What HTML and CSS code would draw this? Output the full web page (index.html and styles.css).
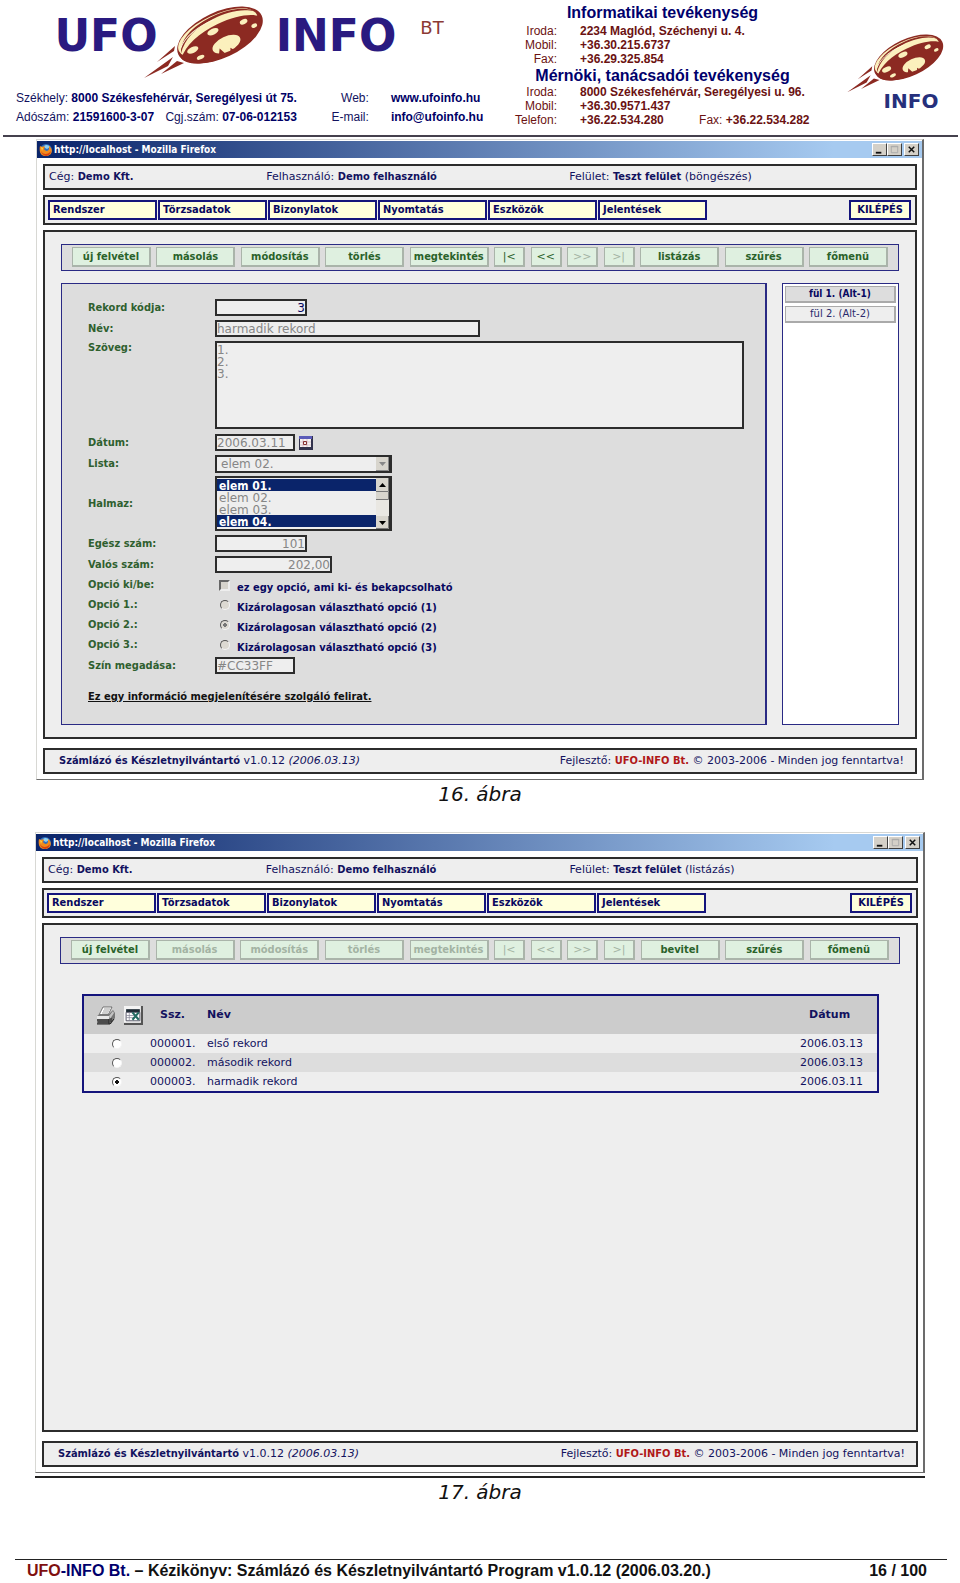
FILE: index.html
```html
<!DOCTYPE html>
<html lang="hu">
<head>
<meta charset="utf-8">
<title>Kézikönyv: Számlázó és Készletnyilvántartó Program</title>
<link rel="stylesheet" href="styles.css">
</head>
<body>
<svg class="defs" aria-hidden="true">
  <symbol id="saucer" viewBox="140 0 130 80">
    <g transform="rotate(-25 220 35)">
      <ellipse cx="220" cy="35" rx="46" ry="23" fill="#8c2a22"/>
      <ellipse cx="219" cy="32" rx="43" ry="18" fill="#fbf0bd"/>
      <path d="M177 35C183 20 203 15 222 15C242 15 257 21 262 29C252 20 236 17 220 17.500C200 18 186 24 177 35Z" fill="#8c2a22"/>
      <path d="M179 30C190 20 206 18 221 18.500" fill="none" stroke="#fff8dc" stroke-width="1"/>
      <path d="M175 40C184 30 202 24 222 24C244 24 259 29 265 36C262 49 244 57 220 57C196 57 178 50 175 40Z" fill="#8c2a22"/>
      <ellipse cx="222" cy="46" rx="15" ry="7.500" fill="#fbf0bd"/>
      <ellipse cx="215" cy="29" rx="6" ry="3" fill="#fbf0bd"/>
      <ellipse cx="247" cy="33" rx="4" ry="2.500" fill="#fbf0bd"/>
      <ellipse cx="255" cy="41" rx="3" ry="2" fill="#fbf0bd"/>
      <ellipse cx="189" cy="37" rx="6" ry="3" fill="#fbf0bd"/>
      <ellipse cx="193" cy="47" rx="4" ry="2" fill="#fbf0bd"/>
      <path d="M211 52l3-5 3 7zM222 56l2-5 3 4z" fill="#8c2a22"/>
    </g>
    <path d="M175 46L157 62L174 51ZM173 57L144 78L168 66ZM177 61L161 74L184 63Z" fill="#8c2a22"/>
  </symbol>
  <symbol id="fox" viewBox="0 0 14 14">
    <circle cx="7" cy="7" r="6" fill="#2f6fc0"/>
    <path d="M5 3C7 1 10 2 11 4L8 6L6 5Z" fill="#8fd0f0"/>
    <path d="M1 3L3 4C4 3 5 3 6 4L5 6C6 8 9 9 10 6L10 3C15 6 13 13 7 13C1 13 0 8 1 3Z" fill="#f08a1c"/>
    <path d="M2 8C4 12 9 12 12 8C11 15 3 14 2 8Z" fill="#d9420f"/>
    <path d="M2 4L4 5L3 8Z" fill="#ffd54a"/>
  </symbol>
  <symbol id="min" viewBox="0 0 14 12"><path d="M3 9.500h6" stroke="#111" stroke-width="2"/></symbol>
  <symbol id="max" viewBox="0 0 14 12"><path d="M3.500 2.500h7v7h-7zM3 3h8" fill="none" stroke="#a9a9a9"/></symbol>
  <symbol id="close" viewBox="0 0 14 12"><path d="M4 3l6 6M10 3l-6 6" stroke="#111" stroke-width="1.600"/></symbol>
</svg>

<header class="letterhead">
  <div class="brand">
    <svg class="logo" viewBox="0 0 490 84" role="img" aria-label="UFO-INFO Bt">
      <text class="wordmark" x="106" y="51" text-anchor="middle">UFO</text>
      <use href="#saucer" x="140" y="0" width="130" height="80"/>
      <text class="wordmark" x="336" y="51" text-anchor="middle">INFO</text>
      <text class="wordmark-bt" x="432" y="34" text-anchor="middle">BT</text>
    </svg>
    <div class="seat">
      <div>Székhely: <b>8000 Székesfehérvár, Seregélyesi út 75.</b></div>
      <div class="seat-label">Web:</div><b>www.ufoinfo.hu</b>
      <div>Adószám: <b>21591600-3-07</b> <span class="reg">Cgj.szám: <b>07-06-012153</b></span></div>
      <div class="seat-label">E-mail:</div><b>info@ufoinfo.hu</b>
    </div>
  </div>
  <div class="offices">
    <h2>Informatikai tevékenység</h2>
    <dl>
      <dt>Iroda:</dt><dd>2234 Maglód, Széchenyi u. 4.</dd>
      <dt>Mobil:</dt><dd>+36.30.215.6737</dd>
      <dt>Fax:</dt><dd>+36.29.325.854</dd>
    </dl>
    <h2>Mérnöki, tanácsadói tevékenység</h2>
    <dl>
      <dt>Iroda:</dt><dd>8000 Székesfehérvár, Seregélyesi u. 96.</dd>
      <dt>Mobil:</dt><dd>+36.30.9571.437</dd>
      <dt>Telefon:</dt><dd>+36.22.534.280 <span class="fax"><span>Fax:</span> +36.22.534.282</span></dd>
    </dl>
  </div>
  <svg class="logo-small" viewBox="0 0 114 84" role="img" aria-label="INFO">
    <use href="#saucer" x="0" y="0" width="105" height="65"/>
    <text class="wordmark-small" x="67" y="79" text-anchor="middle">INFO</text>
  </svg>
</header>

<main>
  <figure>
    <section class="window">
      <div class="titlebar">
        <svg class="fox"><use href="#fox"/></svg><span>http://localhost - Mozilla Firefox</span>
        <div class="winbuttons">
          <button aria-label="Kis méret"><svg><use href="#min"/></svg></button>
          <button aria-label="Teljes méret"><svg><use href="#max"/></svg></button>
          <button class="close" aria-label="Bezárás"><svg><use href="#close"/></svg></button>
        </div>
      </div>
      <div class="panels">
        <div class="panel status">
          <span>Cég: <b>Demo Kft.</b></span><span>Felhasználó: <b>Demo felhasználó</b></span><span>Felület: <b>Teszt felület</b> (böngészés)</span>
        </div>
        <nav class="panel menu">
          <button>Rendszer</button><button>Törzsadatok</button><button>Bizonylatok</button><button>Nyomtatás</button><button>Eszközök</button><button>Jelentések</button>
          <button class="exit">KILÉPÉS</button>
        </nav>
        <div class="panel body">
          <div class="toolbar">
            <button>új felvétel</button><button>másolás</button><button>módosítás</button><button>törlés</button><button>megtekintés</button>
            <button class="step">|&lt;</button><button class="step">&lt;&lt;</button><button class="step" disabled>&gt;&gt;</button><button class="step" disabled>&gt;|</button>
            <button>listázás</button><button>szűrés</button><button>főmenü</button>
          </div>
          <div class="work">
            <form class="record">
              <label for="kod">Rekord kódja:</label><input class="w-code num code" id="kod" value="3">
              <label for="nev">Név:</label><input class="w-name" id="nev" value="harmadik rekord">
              <label class="top" for="szoveg">Szöveg:</label><textarea id="szoveg">1.
2.
3.</textarea>
              <label for="datum">Dátum:</label>
              <div class="date"><input class="w-date" id="datum" value="2006.03.11">
                <button type="button" class="cal" aria-label="Naptár"><svg viewBox="0 0 14 14"><path d="M0 0h14v14H0z" fill="#33334d"/><path d="M0 0h13v3H0z" fill="#5b5bb8"/><path d="M1 3h11v8H1z" fill="#f6f2f2"/><path d="M4 3v8M8 3v8M1 6h11M1 9h11" stroke="#c9a9b9" stroke-width=".6"/><path d="M4.500 5.500h3v3h-3z" fill="none" stroke="#833"/></svg></button></div>
              <label for="lista">Lista:</label>
              <select class="drop" id="lista"><option>elem 02.</option></select>
              <label for="halmaz">Halmaz:</label>
              <select class="list" id="halmaz" multiple size="4"><option selected>elem 01.</option><option>elem 02.</option><option>elem 03.</option><option selected>elem 04.</option></select>
              <label for="egesz">Egész szám:</label><input class="w-code num" id="egesz" value="101">
              <label for="valos">Valós szám:</label><input class="w-real num" id="valos" value="202,00">
              <span class="caption">Opció ki/be:</span><label class="opt"><input type="checkbox"><span>ez egy opció, ami ki- és bekapcsolható</span></label>
              <span class="caption">Opció 1.:</span><label class="opt"><input type="radio" name="opcio"><span>Kizárolagosan választható opció (1)</span></label>
              <span class="caption">Opció 2.:</span><label class="opt"><input type="radio" name="opcio" checked><span>Kizárolagosan választható opció (2)</span></label>
              <span class="caption">Opció 3.:</span><label class="opt"><input type="radio" name="opcio"><span>Kizárolagosan választható opció (3)</span></label>
              <label for="szin">Szín megadása:</label><input class="w-date" id="szin" value="#CC33FF">
              <p class="info">Ez egy információ megjelenítésére szolgáló felirat.</p>
            </form>
            <aside class="tabs">
              <button class="active">fül 1. (Alt-1)</button>
              <button>fül 2. (Alt-2)</button>
            </aside>
          </div>
        </div>
        <div class="panel foot">
          <span><b>Számlázó és Készletnyilvántartó</b> v1.0.12 <i>(2006.03.13)</i></span>
          <span>Fejlesztő: <b class="red">UFO-INFO Bt.</b> © 2003-2006 - Minden jog fenntartva!</span>
        </div>
      </div>
    </section>
    <figcaption>16. ábra</figcaption>
  </figure>

  <figure class="ruled">
    <section class="window">
      <div class="titlebar">
        <svg class="fox"><use href="#fox"/></svg><span>http://localhost - Mozilla Firefox</span>
        <div class="winbuttons">
          <button aria-label="Kis méret"><svg><use href="#min"/></svg></button>
          <button aria-label="Teljes méret"><svg><use href="#max"/></svg></button>
          <button class="close" aria-label="Bezárás"><svg><use href="#close"/></svg></button>
        </div>
      </div>
      <div class="panels">
        <div class="panel status">
          <span>Cég: <b>Demo Kft.</b></span><span>Felhasználó: <b>Demo felhasználó</b></span><span>Felület: <b>Teszt felület</b> (listázás)</span>
        </div>
        <nav class="panel menu">
          <button>Rendszer</button><button>Törzsadatok</button><button>Bizonylatok</button><button>Nyomtatás</button><button>Eszközök</button><button>Jelentések</button>
          <button class="exit">KILÉPÉS</button>
        </nav>
        <div class="panel body">
          <div class="toolbar">
            <button>új felvétel</button><button disabled>másolás</button><button disabled>módosítás</button><button disabled>törlés</button><button disabled>megtekintés</button>
            <button class="step" disabled>|&lt;</button><button class="step" disabled>&lt;&lt;</button><button class="step" disabled>&gt;&gt;</button><button class="step" disabled>&gt;|</button>
            <button>bevitel</button><button>szűrés</button><button>főmenü</button>
          </div>
          <table class="records">
            <thead>
              <tr>
                <th class="c-pick"><div class="actions">
                  <button aria-label="Nyomtatás"><svg viewBox="0 0 19 19"><path d="M7 1l9 0-4 8H3z" fill="#fff" stroke="#555" stroke-width=".8"/><path d="M8 3h6M7 5h6M6 7h6" stroke="#777" stroke-width=".7"/><path d="M1 10l3-2h9l4-4 2 3v5l-4 6H1z" fill="#777"/><path d="M1 10h12v3H1z" fill="#e8e8e8"/><path d="M13 10l4-5 1 2-4 6z" fill="#c4c4c4"/><path d="M1 14h12M2 16h11M13 13v5M15 12v4" stroke="#222" stroke-width="1"/><path d="M1 18h13l4-5" fill="none" stroke="#222"/></svg></button>
                  <button aria-label="Exportálás"><svg viewBox="0 0 18 18"><path d="M0 0h18v18H0z" fill="#555"/><path d="M0 0h16v16H0z" fill="#f4f4f4"/><path d="M2 3h13v3H2z" fill="#1c2a33"/><path d="M2 6h13v8H2z" fill="#fff" stroke="#445" stroke-width=".8"/><path d="M2 9h8M2 11h8M5 6v8" stroke="#889" stroke-width=".7"/><path d="M8 6l6 7M14 6l-6 7" stroke="#236b62" stroke-width="2"/></svg></button>
                </div></th>
                <th class="c-no">Ssz.</th><th class="c-name">Név</th><th class="c-date">Dátum</th>
              </tr>
            </thead>
            <tbody>
              <tr><td class="c-pick"><input type="radio" name="sor" aria-label="első rekord"></td><td class="c-no">000001.</td><td class="c-name">első rekord</td><td class="c-date">2006.03.13</td></tr>
              <tr><td class="c-pick"><input type="radio" name="sor" aria-label="második rekord"></td><td class="c-no">000002.</td><td class="c-name">második rekord</td><td class="c-date">2006.03.13</td></tr>
              <tr><td class="c-pick"><input type="radio" name="sor" checked aria-label="harmadik rekord"></td><td class="c-no">000003.</td><td class="c-name">harmadik rekord</td><td class="c-date">2006.03.11</td></tr>
            </tbody>
          </table>
        </div>
        <div class="panel foot">
          <span><b>Számlázó és Készletnyilvántartó</b> v1.0.12 <i>(2006.03.13)</i></span>
          <span>Fejlesztő: <b class="red">UFO-INFO Bt.</b> © 2003-2006 - Minden jog fenntartva!</span>
        </div>
      </div>
    </section>
    <figcaption>17. ábra</figcaption>
  </figure>
</main>

<footer class="pagefoot">
  <span><span class="ufo">UFO</span><span class="navy">-INFO Bt.</span> – Kézikönyv: Számlázó és Készletnyilvántartó Program v1.0.12 (2006.03.20.)</span>
  <span>16 / 100</span>
</footer>
</body>
</html>
```

FILE: styles.css
```css
* { box-sizing: border-box; }

body {
  margin: 0;
  background: #fff;
  color: #12125e;
  font: 12px/18px "Liberation Sans", Arial, sans-serif;
}

button, input, select, textarea {
  font: inherit;
  margin: 0;
  padding: 0;
  border-radius: 0;
}

.defs { position: absolute; width: 0; height: 0; }

/* Letterhead */
.letterhead {
  display: grid;
  grid-template-columns: 490px 1fr 114px;
  min-height: 137px;
  margin: 0 2px 2px 3px;
  border-bottom: 2px solid #45414d;
}
.brand { margin-left: -3px; }
.logo { display: block; width: 490px; height: 84px; }
.wordmark { font: bold 44px "DejaVu Sans", sans-serif; fill: #2a1a80; }
.wordmark-bt { font: 18px "DejaVu Sans", sans-serif; fill: #8c3a34; }
.wordmark-small { font: bold 20px "DejaVu Sans", sans-serif; fill: #26307c; }
.seat {
  display: grid;
  grid-template-columns: 1fr 50px 100px;
  row-gap: 1px;
  column-gap: 22px;
  padding: 5px 4px 0 16px;
  white-space: nowrap;
}
.seat b { color: #000066; }
.seat-label { text-align: right; }
.reg { margin-left: 8px; }

.offices { padding-top: 4px; color: #6b1212; line-height: 14px; white-space: nowrap; }
.offices h2 {
  margin: 0 12px 2px 0;
  color: #00006c;
  font-size: 16px;
  line-height: 18px;
  text-align: center;
}
.offices dl { display: grid; grid-template-columns: 64px 1fr; column-gap: 23px; margin: 0; }
.offices dl + h2 { margin: 1px 12px 0 0; }
.offices dt { text-align: right; }
.offices dd { margin: 0; font-weight: bold; }
.fax { margin-left: 32px; }
.fax span { font-weight: normal; }
.logo-small { width: 114px; height: 84px; margin-top: 29px; }

/* Figures and windows */
main { padding: 0 35px; }
figure { margin: 0; }
figure:first-child { padding: 0 1px; }
figcaption {
  height: 52px;
  color: #111;
  font: italic 20px/28px "DejaVu Sans", Verdana, sans-serif;
  text-align: center;
}
.ruled .window { margin-bottom: 3px; }
.ruled figcaption { height: 83px; border-top: 2px solid #222; }

.window {
  border: 1px solid #d8d8d4;
  border-right: 2px solid #6c6c6c;
  border-bottom: 1px solid #6c6c6c;
  padding-top: 1px;
  font: 11px/14px "DejaVu Sans", Verdana, sans-serif;
  white-space: nowrap;
}
.window b, .window label, .caption, .info {
  font-family: "DejaVu Sans Condensed", "DejaVu Sans", sans-serif;
  font-weight: bold;
}

.titlebar {
  display: flex;
  align-items: center;
  gap: 1px;
  height: 17px;
  padding: 0 3px 0 2px;
  background: linear-gradient(90deg, #0a246a, #a6caf0 90%);
  color: #fff;
  font: bold 10px/16px "DejaVu Sans Condensed", "DejaVu Sans", sans-serif;
}
.fox { width: 14px; height: 14px; }
.winbuttons { display: flex; margin-left: auto; }
.winbuttons button {
  display: flex;
  width: 15px;
  height: 13px;
  border: 1px solid;
  border-color: #fff #404040 #404040 #fff;
  background: #d4d0c8;
}
.winbuttons svg { width: 13px; height: 11px; }
.winbuttons .close { margin-left: 2px; }

.panels { display: grid; row-gap: 5px; padding: 6px 5px 5px 6px; }
.panel { border: 2px solid #2c2c2c; background: #eee; }

.status {
  display: grid;
  grid-template-columns: 218fr 304fr 343fr;
  align-items: center;
  height: 26px;
  padding: 0 4px;
}

.menu { display: flex; gap: 1px; height: 30px; padding: 3px 4px 3px 3px; }
.menu button {
  flex: 0 1 109px;
  padding-left: 3px;
  border: 2px solid #14147c;
  background: #ffffdc;
  color: #080860;
  font: bold 11px/14px "DejaVu Sans Condensed", "DejaVu Sans", sans-serif;
  text-align: left;
}
.menu .exit { flex-basis: 62px; margin-left: auto; padding: 0; text-align: center; }

.body { min-height: 509px; padding: 12px 16px; }
.toolbar {
  display: flex;
  justify-content: space-between;
  height: 27px;
  padding: 2px 10px 3px;
  border: 1px solid #2a2a84;
  background: #ddd;
}
.toolbar button {
  flex: 0 1 79px;
  min-width: 0;
  border: 1px solid #aab4aa;
  border-right-width: 2px;
  border-bottom-width: 2px;
  background: #dff0e0;
  color: #2a622a;
  font: bold 11px/14px "DejaVu Sans Condensed", "DejaVu Sans", sans-serif;
}
.toolbar .step { flex-basis: 31px; font: 11px/14px "DejaVu Sans", sans-serif; }
.toolbar button:disabled { color: #a3b3a3; }

.work { display: grid; grid-template-columns: 706fr 117fr; column-gap: 15px; margin-top: 12px; min-height: 442px; }
.record {
  display: grid;
  grid-template-columns: 127px 1fr;
  grid-template-rows: 17px 17px 89px 17px 17px 55px 17px 17px 16px 16px 16px 16px 17px;
  row-gap: 4px;
  align-content: start;
  justify-items: start;
  padding: 15px 21px 15px 26px;
  border: 1px solid #2a2a84;
  border-right-width: 2px;
  background: #ddd;
}
.record > label:not(.opt), .caption { align-self: center; color: #2f602f; }
.record > label.top:not(.opt) { align-self: start; }
.record input:not([type="checkbox"], [type="radio"]), .record textarea {
  height: 17px;
  border: 2px solid #2c2c2c;
  background: #eee;
  color: #868686;
  font-size: 12px;
  line-height: 12px;
}
.record textarea { width: 100%; height: 88px; resize: none; overflow: hidden; padding: 1px 0; }
.record .w-code { width: 92px; }
.record .w-name { width: 265px; }
.record .w-date { width: 80px; }
.record .w-real { width: 117px; }
.record .num { text-align: right; }
.record .code { color: #080860 !important; }
.date { display: flex; align-items: center; gap: 4px; }
.cal { display: flex; width: 14px; height: 14px; border: 0; background: none; }

.drop, .list {
  width: 177px;
  border: 2px solid #2c2c2c;
  border-right-width: 3px;
  background-color: #eee;
  background-repeat: no-repeat;
  background-position: right top;
  color: #868686;
  font-size: 12px;
}
.drop {
  appearance: none;
  height: 18px;
  padding-left: 4px;
  line-height: 13px;
  background-image: url("data:image/svg+xml,%3Csvg xmlns='http://www.w3.org/2000/svg' width='13' height='14'%3E%3Cpath d='M0 0h13v14H0z' fill='%23d8d5cd'/%3E%3Cpath d='M0 13.500h12.500V0' fill='none' stroke='%23888'/%3E%3Cpath d='M3 5h7l-3.500 4z' fill='%23888'/%3E%3C/svg%3E");
}
.list {
  height: 55px;
  overflow: hidden;
  padding: 1px 13px 0 0;
  background-image: url("data:image/svg+xml,%3Csvg xmlns='http://www.w3.org/2000/svg' width='13' height='51'%3E%3Cpath d='M0 0h13v51H0z' fill='%23e9e7e2'/%3E%3Cpath d='M0 0h13v21H0zM0 38h13v13H0z' fill='%23d8d5cd'/%3E%3Cpath d='M0 13.500h12.500V0M0 21.500h12.500V14M0 50.500h12.500V38' fill='none' stroke='%23777'/%3E%3Cpath d='M3 9h7L6.500 5zM3 43h7l-3.500 4z'/%3E%3C/svg%3E");
}
.list option { min-height: 12px; height: 12px; padding: 0 0 0 2px; line-height: 12px; }
.list option:checked {
  background: linear-gradient(#0a246a, #0a246a);
  color: #fff;
  font-family: "DejaVu Sans Condensed", "DejaVu Sans", sans-serif;
  font-weight: bold;
}

.opt { display: flex; gap: 7px; color: #080860; }
.opt span { padding-top: 4px; line-height: 14px; }
input[type="checkbox"] {
  appearance: none;
  width: 11px;
  height: 11px;
  margin: 3px 0 0 4px;
  border: 2px solid;
  border-color: #666 #eee #eee #666;
  background: #d6d3cc;
}
input[type="radio"] {
  appearance: none;
  width: 10px;
  height: 10px;
  border: 1px solid;
  border-color: #555 #f4f4f4 #f4f4f4 #555;
  border-radius: 50%;
  background: #fff;
}
.opt input[type="radio"] { margin: 3px 0 0 5px; background: #dcd9d2; }
input[type="radio"]:checked { background: radial-gradient(circle, #111 2px, #fff 2px); }
.opt input[type="radio"]:checked { background: radial-gradient(circle, #777 2px, #dcd9d2 2px); }
.info { grid-column: 1 / -1; margin: 12px 0 0; color: #111; text-decoration: underline; }

.tabs { display: flex; flex-direction: column; gap: 3px; padding: 2px; border: 1px solid #2a2a84; background: #fff; }
.tabs button {
  height: 17px;
  border: 1px solid #aaa;
  border-right-width: 2px;
  border-bottom-width: 2px;
  background: #eee;
  color: #2a2a6c;
  font: 10px/12px "DejaVu Sans", sans-serif;
}
.tabs .active { background: #ddd; color: #080860; font: bold 10px/12px "DejaVu Sans Condensed", sans-serif; }

.foot {
  display: flex;
  justify-content: space-between;
  align-items: center;
  height: 26px;
  margin-top: 4px;
  padding: 0 11px 0 14px;
}
.red { color: #b01818; }

/* Record list */
.records {
  width: calc(100% - 43px);
  margin: 30px 0 0 22px;
  border: 2px solid #14147c;
  border-spacing: 0;
  background: #eee;
}
.records th, .records td { padding: 0; text-align: left; }
.records th { height: 38px; background: #ccc; }
.records td { height: 19px; }
.records tbody tr:nth-child(even) { background: #ddd; }
.records .c-pick { width: 66px; text-align: center; }
.records th.c-no { padding-left: 10px; }
.records .c-no { width: 57px; }
.records .c-date { width: 77px; }
.records th.c-date { padding-left: 9px; }
.records input { display: block; margin: 0 auto; }
.actions { display: flex; gap: 9px; padding-left: 12px; }
.actions button { display: flex; width: 19px; height: 19px; border: 0; background: none; }

/* Page footer */
.pagefoot {
  display: flex;
  justify-content: space-between;
  margin: 0 13px 0 15px;
  padding: 2px 20px 0 12px;
  border-top: 1px solid #222;
  color: #111;
  font-size: 16px;
  font-weight: bold;
  line-height: 18px;
  white-space: nowrap;
}
.ufo { color: #800f0f; }
.navy { color: #00006c; }
```
